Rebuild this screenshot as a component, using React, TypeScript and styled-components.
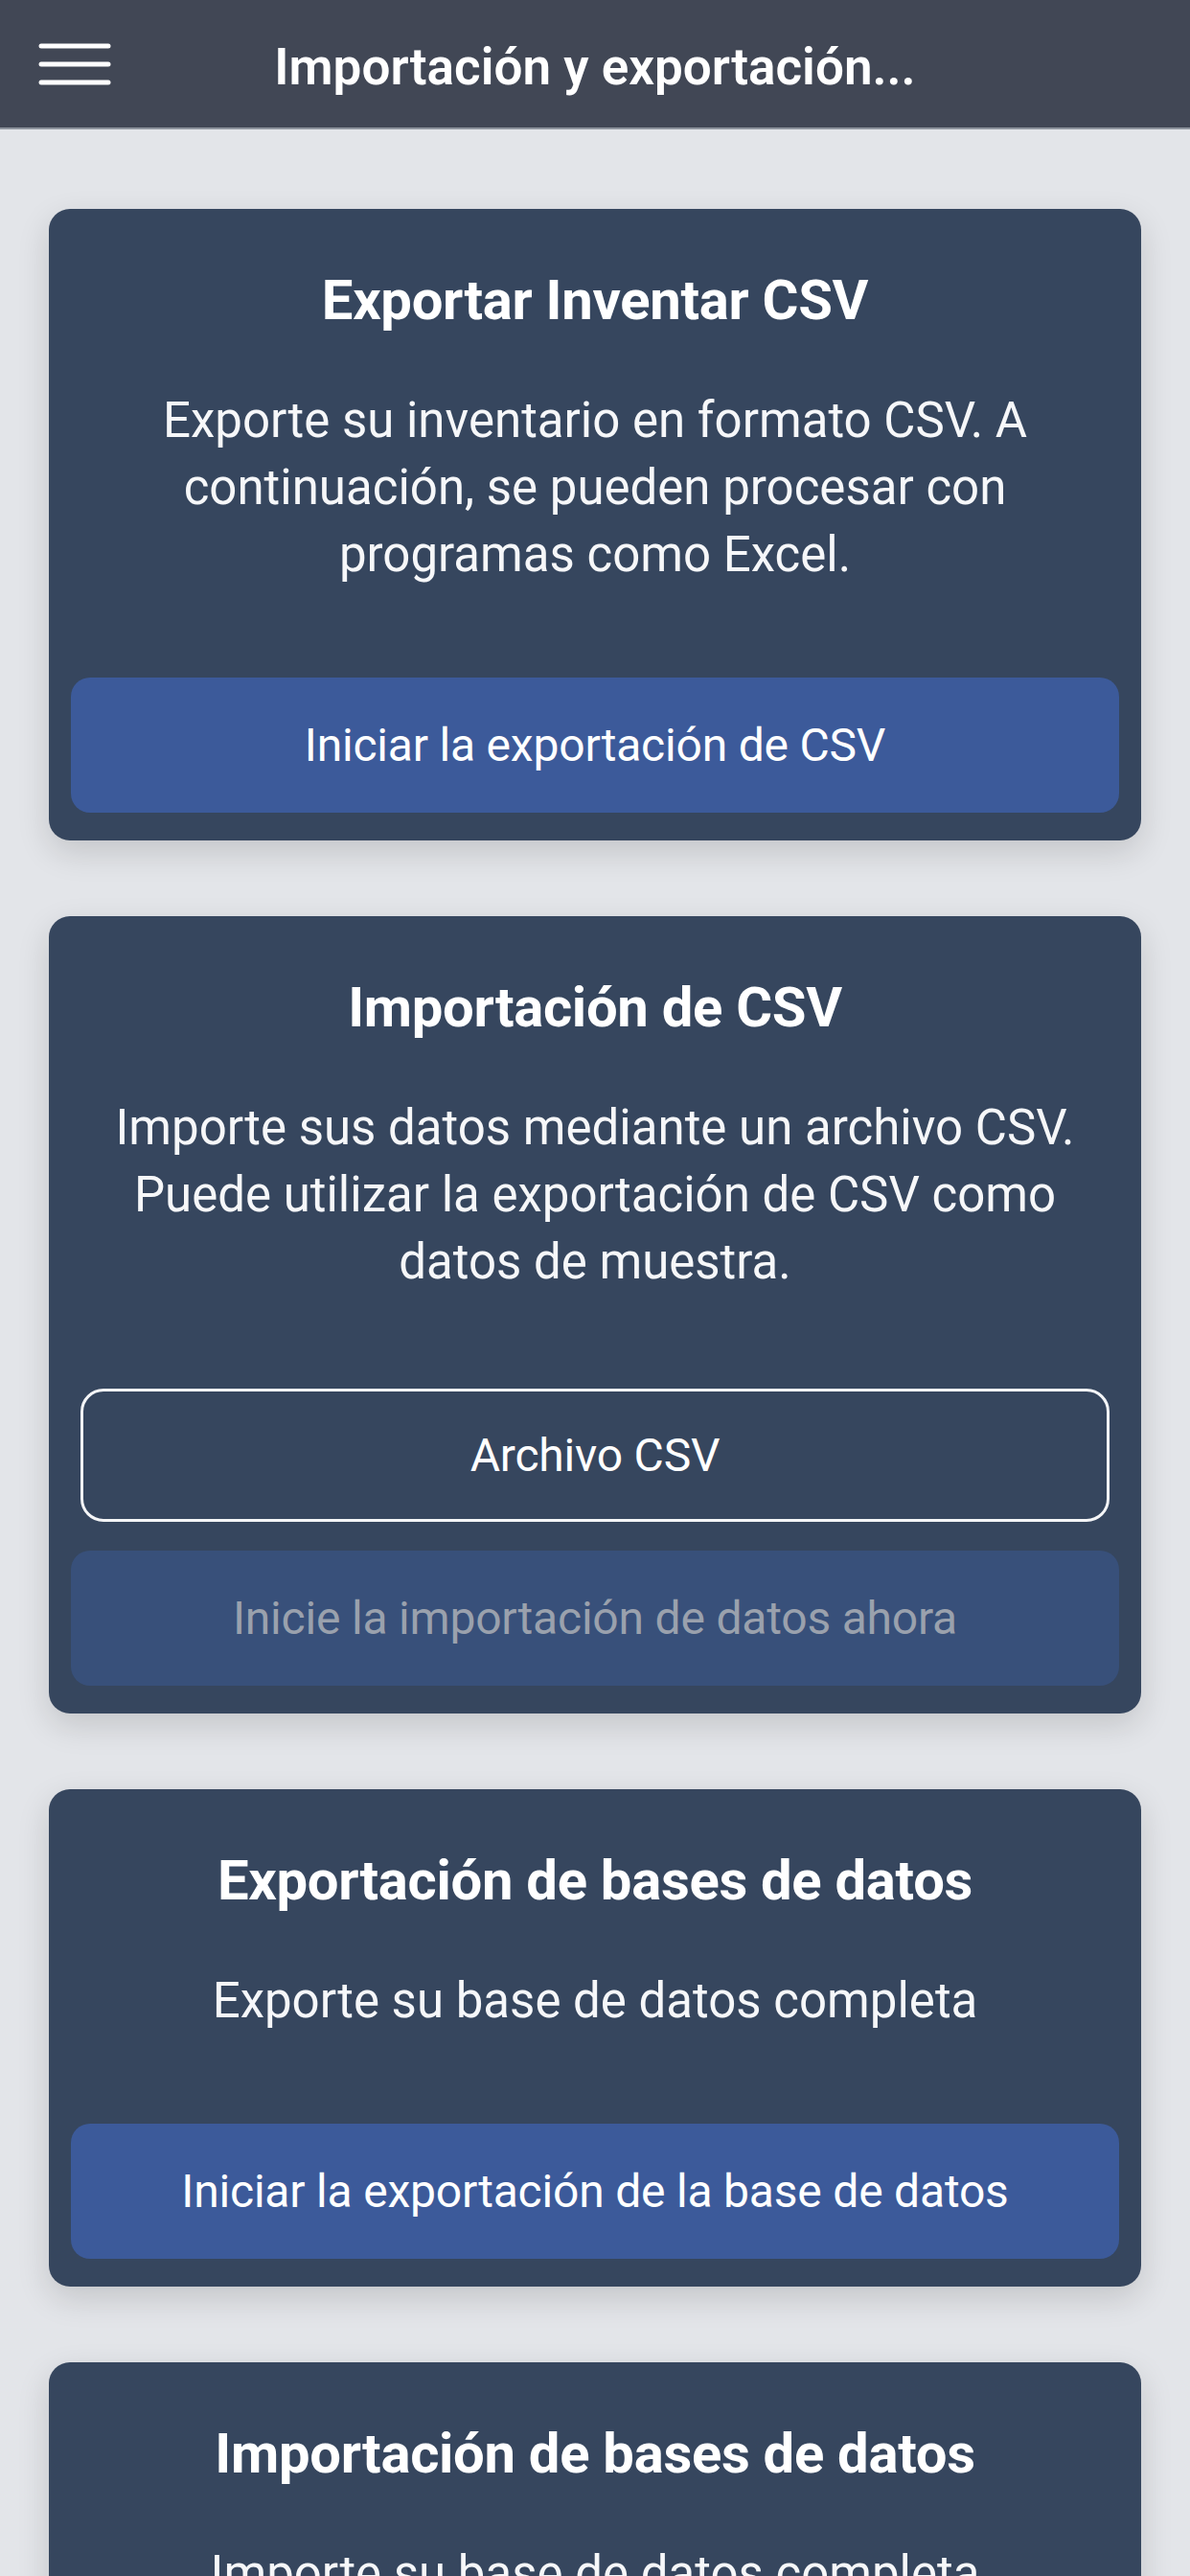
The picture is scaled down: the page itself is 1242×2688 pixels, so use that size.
import styled, { createGlobalStyle } from 'styled-components'

const GlobalStyle = createGlobalStyle`
  html, body {
    margin: 0;
    padding: 0;
    background: #e3e5e9;
    font-family: Roboto, "Noto Sans", "Liberation Sans", sans-serif;
  }
`

const Page = styled.div`
  width: 1242px;
  height: 2688px;
  background: #e3e5e9;
  overflow: hidden;
`

const Header = styled.header`
  height: 133px;
  background: #414755;
  border-bottom: 2px solid #8e949e;
  display: flex;
  align-items: center;
  position: relative;
`

const MenuButton = styled.button`
  border: 0;
  background: none;
  padding: 0;
  margin-left: 38px;
  width: 80px;
  height: 60px;
  display: flex;
  align-items: center;
  justify-content: center;
`

const Title = styled.h1`
  position: absolute;
  left: 0;
  right: 0;
  top: 6px;
  bottom: 0;
  margin: auto;
  height: fit-content;
  max-width: 720px;
  text-align: center;
  color: #fff;
  font-size: 53px;
  font-weight: 600;
  white-space: nowrap;
  overflow: hidden;
  text-overflow: ellipsis;
  pointer-events: none;
`

const Content = styled.main`
  display: flex;
  flex-direction: column;
  gap: 79px;
  padding: 83px 51px 0;
`

const Card = styled.section`
  background: #36465e;
  border-radius: 22px;
  padding: 0 23px 29px;
  box-shadow: 0 12px 34px rgba(0, 0, 0, 0.14);
  display: flex;
  flex-direction: column;
  color: #fff;
`

const CardTitle = styled.h2`
  margin: 62px 0 0;
  font-size: 58px;
  line-height: 66px;
  font-weight: 700;
  letter-spacing: -0.3px;
  text-align: center;
`

const CardText = styled.p`
  margin: 58px 20px 0;
  font-size: 51px;
  line-height: 70px;
  font-weight: 400;
  text-align: center;
  color: #f6f7f9;
`

const Actions = styled.div`
  margin-top: 93px;
  display: flex;
  flex-direction: column;
  gap: 30px;
`

const Button = styled.button<{ $variant?: 'solid' | 'outline' | 'disabled' }>`
  height: ${p => (p.$variant === 'outline' ? '139px' : '141px')};
  margin: ${p => (p.$variant === 'outline' ? '4px 10px 0' : '0')};
  border-radius: ${p => (p.$variant === 'outline' ? '24px' : '20px')};
  border: ${p => (p.$variant === 'outline' ? '3px solid #f4f5f7' : '0')};
  background: ${p =>
    p.$variant === 'outline' ? 'transparent' : p.$variant === 'disabled' ? '#38507a' : '#3c5a9a'};
  color: ${p => (p.$variant === 'disabled' ? '#9aa1ad' : '#fff')};
  font-family: Roboto, "Noto Sans", "Liberation Sans", sans-serif;
  font-size: 48px;
  font-weight: 400;
  letter-spacing: -0.2px;
  display: flex;
  align-items: center;
  justify-content: center;
`

function MenuIcon() {
  return (
    <svg width="76" height="46" viewBox="0 0 76 46">
      <g stroke="#fff" strokeWidth="5" strokeLinecap="round">
        <line x1="3" y1="4" x2="73" y2="4" />
        <line x1="3" y1="23" x2="73" y2="23" />
        <line x1="3" y1="42" x2="73" y2="42" />
      </g>
    </svg>
  )
}

function App() {
  return (
    <Page>
      <GlobalStyle />
      <Header>
        <MenuButton aria-label="menu">
          <MenuIcon />
        </MenuButton>
        <Title>Importación y exportación...</Title>
      </Header>

      <Content>
        <Card>
          <CardTitle>Exportar Inventar CSV</CardTitle>
          <CardText>
            Exporte su inventario en formato CSV. A continuación, se pueden procesar con programas
            como Excel.
          </CardText>
          <Actions>
            <Button>Iniciar la exportación de CSV</Button>
          </Actions>
        </Card>

        <Card>
          <CardTitle>Importación de CSV</CardTitle>
          <CardText>
            Importe sus datos mediante un archivo CSV. Puede utilizar la exportación de CSV como
            datos de muestra.
          </CardText>
          <Actions>
            <Button $variant="outline">Archivo CSV</Button>
            <Button $variant="disabled" disabled>
              Inicie la importación de datos ahora
            </Button>
          </Actions>
        </Card>

        <Card>
          <CardTitle>Exportación de bases de datos</CardTitle>
          <CardText>Exporte su base de datos completa</CardText>
          <Actions>
            <Button>Iniciar la exportación de la base de datos</Button>
          </Actions>
        </Card>

        <Card>
          <CardTitle>Importación de bases de datos</CardTitle>
          <CardText>Importe su base de datos completa</CardText>
        </Card>
      </Content>
    </Page>
  )
}

export default App
